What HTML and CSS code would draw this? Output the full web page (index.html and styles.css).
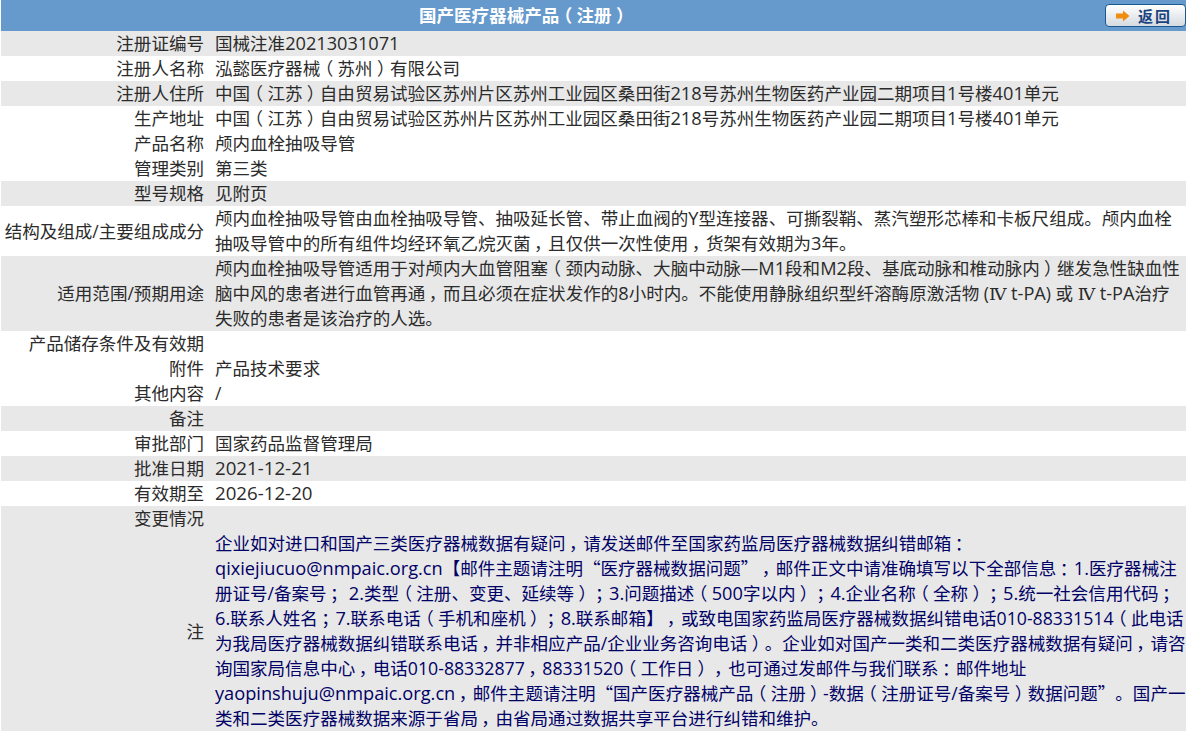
FILE: index.html
```html
<!DOCTYPE html>
<html lang="zh-CN">
<head>
<meta charset="utf-8">
<title>国产医疗器械产品（注册）</title>
<link rel="stylesheet" href="styles.css">
</head>
<body>
<table class="detail">
<colgroup><col class="col-label"><col class="col-value"></colgroup>
<tr class="head"><td colspan="2"><div class="head-bar"><span class="title">国产医疗器械产品<span class="p">（</span>注册<span class="p">）</span></span>
<a class="back"><svg class="arrow" width="14" height="12" viewBox="0 0 14 12"><path d="M0 3.5H7V0.5L13.5 6L7 11.5V8.5H0Z" fill="#f08c10"/></svg><span class="back-text">返回</span></a></div></td></tr>
<tr class="alt"><td class="k">注册证编号</td><td>国械注准<span class="en">20213031071</span></td></tr>
<tr><td class="k">注册人名称</td><td>泓懿医疗器械<span class="p">（</span>苏州<span class="p">）</span>有限公司</td></tr>
<tr class="alt"><td class="k">注册人住所</td><td>中国<span class="p">（</span>江苏<span class="p">）</span>自由贸易试验区苏州片区苏州工业园区桑田街<span class="en">218</span>号苏州生物医药产业园二期项目<span class="en">1</span>号楼<span class="en">401</span>单元</td></tr>
<tr><td class="k">生产地址</td><td>中国<span class="p">（</span>江苏<span class="p">）</span>自由贸易试验区苏州片区苏州工业园区桑田街<span class="en">218</span>号苏州生物医药产业园二期项目<span class="en">1</span>号楼<span class="en">401</span>单元</td></tr>
<tr><td class="k">产品名称</td><td>颅内血栓抽吸导管</td></tr>
<tr><td class="k">管理类别</td><td>第三类</td></tr>
<tr class="alt"><td class="k">型号规格</td><td>见附页</td></tr>
<tr><td class="k">结构及组成/主要组成成分</td><td>颅内血栓抽吸导管由血栓抽吸导管、抽吸延长管、带止血阀的<span class="en">Y</span>型连接器、可撕裂鞘、蒸汽塑形芯棒和卡板尺组成。颅内血栓抽吸导管中的所有组件均经环氧乙烷灭菌<span class="cm">，</span>且仅供一次性使用<span class="cm">，</span>货架有效期为<span class="en">3</span>年。</td></tr>
<tr class="alt"><td class="k">适用范围/预期用途</td><td>颅内血栓抽吸导管适用于对颅内大血管阻塞<span class="p">（</span>颈内动脉、大脑中动脉—<span class="en">M1</span>段和<span class="en">M2</span>段、基底动脉和椎动脉内<span class="p">）</span>继发急性缺血性脑中风的患者进行血管再通<span class="cm">，</span>而且必须在症状发作的<span class="en">8</span>小时内。不能使用静脉组织型纤溶酶原激活物 (<span class="rn">Ⅳ</span> <span class="en">t-PA</span>) 或 <span class="rn">Ⅳ</span> <span class="en">t-PA</span>治疗失败的患者是该治疗的人选。</td></tr>
<tr><td class="k">产品储存条件及有效期</td><td></td></tr>
<tr><td class="k">附件</td><td>产品技术要求</td></tr>
<tr><td class="k">其他内容</td><td>/</td></tr>
<tr class="alt"><td class="k">备注</td><td></td></tr>
<tr><td class="k">审批部门</td><td>国家药品监督管理局</td></tr>
<tr class="alt"><td class="k">批准日期</td><td><span class="date">2021-12-21</span></td></tr>
<tr><td class="k">有效期至</td><td><span class="date">2026-12-20</span></td></tr>
<tr class="alt"><td class="k">变更情况</td><td></td></tr>
<tr class="alt"><td class="k">注</td><td class="note">企业如对进口和国产三类医疗器械数据有疑问<span class="cm">，</span>请发送邮件至国家药监局医疗器械数据纠错邮箱<span class="cm">：</span><span class="en">qixiejiucuo@nmpaic.org.cn</span>【邮件主题请注明<span class="q">“</span>医疗器械数据问题<span class="q">”</span><span class="cm">，</span>邮件正文中请准确填写以下全部信息<span class="cm">：</span><span class="en">1.</span>医疗器械注册证号/备案号<span class="cm">；</span> <span class="en">2.</span>类型<span class="p">（</span>注册、变更、延续等<span class="p">）</span><span class="cm">；</span><span class="en">3.</span>问题描述<span class="p">（</span><span class="en">500</span>字以内<span class="p">）</span><span class="cm">；</span><span class="en">4.</span>企业名称<span class="p">（</span>全称<span class="p">）</span><span class="cm">；</span><span class="en">5.</span>统一社会信用代码<span class="cm">；</span><span class="en">6.</span>联系人姓名<span class="cm">；</span><span class="en">7.</span>联系电话<span class="p">（</span>手机和座机<span class="p">）</span><span class="cm">；</span><span class="en">8.</span>联系邮箱】<span class="cm">，</span>或致电国家药监局医疗器械数据纠错电话<span class="tel">010-88331514</span><span class="p">（</span>此电话为我局医疗器械数据纠错联系电话<span class="cm">，</span>并非相应产品/企业业务咨询电话<span class="p">）</span>。企业如对国产一类和二类医疗器械数据有疑问<span class="cm">，</span>请咨询国家局信息中心<span class="cm">，</span>电话<span class="tel">010-88332877</span><span class="cm">，</span><span class="tel">88331520</span><span class="p">（</span>工作日<span class="p">）</span><span class="cm">，</span>也可通过发邮件与我们联系<span class="cm">：</span>邮件地址<span class="en">yaopinshuju@nmpaic.org.cn</span><span class="cm">，</span>邮件主题请注明<span class="q">“</span>国产医疗器械产品<span class="p">（</span>注册<span class="p">）</span>-数据<span class="p">（</span>注册证号/备案号<span class="p">）</span>数据问题<span class="q">”</span>。国产一类和二类医疗器械数据来源于省局<span class="cm">，</span>由省局通过数据共享平台进行纠错和维护。</td></tr>
</table>
</body>
</html>
```
FILE: styles.css
```css
html, body { margin: 0; padding: 0; background: #fff; }
body { font-family: "Open Sans", "Noto Sans CJK SC", sans-serif; font-size: 17.55px; line-height: 25px; color: #2b2b2b; overflow: hidden; text-spacing-trim: space-all; }
.detail { border-collapse: collapse; table-layout: fixed; width: 1185px; margin-left: 1px; }
.col-label { width: 206px; }
.detail td { padding: 0; height: 25px; vertical-align: middle; }
.detail .k { text-align: right; padding-right: 3px; }
.detail td + td { padding-left: 8px; }
.alt td { background: #e8e8e8; }
.head td { height: 31px; background: #6699cc; color: #fff; font-weight: bold; }
.head-bar { display: flex; align-items: center; }
.title { width: 1046px; text-align: center; }
.back { width: 81px; height: 23px; margin-left: 58px; box-sizing: border-box; border: 1px solid #1a5890; border-radius: 4px; background: linear-gradient(#ffffff, #d4dae0); display: flex; align-items: center; gap: 8px; padding-left: 10px; }
.arrow { flex: none; }
.back-text { color: #1a4480; font-size: 15px; font-weight: bold; line-height: 20px; letter-spacing: 2px; }
.note { color: #000066; }
.en { font-size: 18.2px; line-height: 1; }
.tel { font-size: 17.7px; line-height: 1; }
.date { font-size: 18.7px; line-height: 1; }
.rn { font-family: "DejaVu Serif", serif; line-height: 1; }
.q { font-family: "Noto Sans CJK SC", sans-serif; line-height: 1; }
.p { font-feature-settings: "halt"; margin: 0 4.3px; }
.cm { font-feature-settings: "halt"; margin: 0 5.4px 0 3.4px; }
```
